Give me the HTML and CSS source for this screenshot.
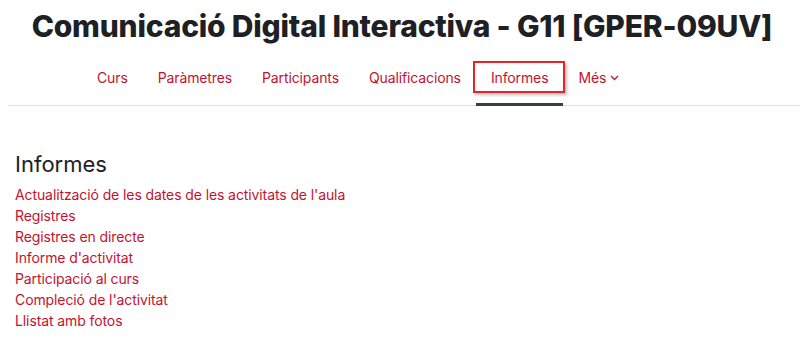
FILE: index.html
```html
<!DOCTYPE html>
<html lang="ca">
<head>
<meta charset="utf-8">
<title>Informes</title>
<link rel="stylesheet" href="styles.css">
</head>
<body>
<header class="page-header">
  <h1 class="title">Comunicació Digital Interactiva - G11 [GPER-09UV]</h1>
</header>
<nav class="secnav">
  <ul class="tabs">
    <li class="tab"><a href="#">Curs</a></li>
    <li class="tab"><a href="#">Paràmetres</a></li>
    <li class="tab"><a href="#">Participants</a></li>
    <li class="tab"><a href="#">Qualificacions</a></li>
    <li class="tab active"><a href="#">Informes</a><span class="highlight"></span></li>
    <li class="tab"><a href="#">Més <svg class="chev" width="9" height="6" viewBox="0 0 9 6"><path d="M1 1 L4.5 4.5 L8 1" fill="none" stroke="currentColor" stroke-width="1.3"/></svg></a></li>
  </ul>
</nav>
<main class="content">
  <h2 class="section-title">Informes</h2>
  <ul class="links">
    <li><a href="#">Actualització de les dates de les activitats de l'aula</a></li>
    <li><a href="#">Registres</a></li>
    <li><a href="#">Registres en directe</a></li>
    <li><a href="#">Informe d'activitat</a></li>
    <li><a href="#">Participació al curs</a></li>
    <li><a href="#">Compleció de l'activitat</a></li>
    <li><a href="#">Llistat amb fotos</a></li>
  </ul>
</main>
</body>
</html>
```
FILE: styles.css
```css
* { box-sizing: border-box; }
body {
  margin: 0;
  background: #fff;
  font-family: Inter, "Noto Sans", sans-serif;
  color: #1d2125;
  overflow: hidden;
}
a { color: #c4122f; text-decoration: none; }
.page-header {
  display: flex;
  justify-content: center;
  padding-top: 6px;
  padding-left: 4px;
  height: 48px;
}
.title {
  margin: 0;
  font-size: 30px;
  font-weight: 800;
  line-height: 40px;
  letter-spacing: -0.2px;
  color: #1d2125;
  white-space: nowrap;
}
.secnav {
  margin-left: 8px;
  border-bottom: 1px solid #dee2e6;
  height: 58px;
}
.tabs {
  list-style: none;
  margin: 0;
  padding: 0 0 0 74px;
  display: flex;
  height: 100%;
}
.tab {
  position: relative;
  display: flex;
  align-items: center;
  padding: 2px 15px 0;
  font-size: 14px;
  letter-spacing: -0.12px;
}
.tab a { display: flex; align-items: center; gap: 4px; }
.tab.active { border-bottom: 3px solid #3a3f45; margin-bottom: -1px; padding-top: 4px; }
.chev { margin-top: 1px; }
.highlight {
  position: absolute;
  left: -3px;
  right: -2px;
  top: 13px;
  height: 32px;
  border: 2px solid #e8212b;
  box-shadow: 2px 2px 3px rgba(0,0,0,0.25);
}
.content { padding: 43px 15px 0; }
.section-title {
  margin: 0 0 5px;
  font-size: 22px;
  font-weight: 400;
  line-height: 30px;
}
.links {
  list-style: none;
  margin: 0;
  padding: 0;
  font-size: 14px;
  line-height: 21px;
  letter-spacing: -0.1px;
}
```
